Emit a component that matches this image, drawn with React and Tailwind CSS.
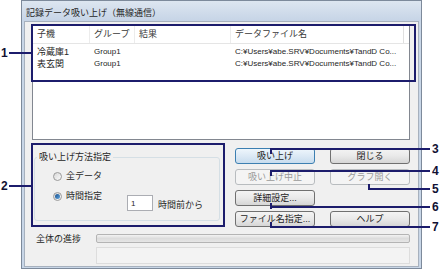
export default function App() {
  return (
    <div className="relative w-[443px] h-[271px] overflow-hidden bg-white text-[#262626] font-['Liberation_Sans','Noto_Sans_CJK_JP',sans-serif] text-[9px]">
      {/* window */}
      <div className="ml-[21px] w-[401px] h-[269px] flex flex-col border border-[#7d8a9b] bg-[#c8d6e7]">
        <div className="h-[20px] shrink-0 flex items-center pl-[4px] pt-[4px] leading-[12px] bg-gradient-to-b from-[#dde6f0] to-[#c6d4e6]">
          記録データ吸い上げ（無線通信）
        </div>

        <div className="flex-1 ml-[2px] mr-[2px] mb-[1px] border border-[#a7b1be] bg-[#f0f0f0] flex flex-col">
          {/* list */}
          <div className="ml-[7px] mt-[3px] w-[378px] h-[115px] border border-[#828790] bg-white flex flex-col">
            <div className="h-[18px] shrink-0 flex border-b border-[#e5e5e5] text-[#3a3a3a] leading-[17px]">
              <div className="w-[57px] pl-[4px] border-r border-[#ececec]">子機</div>
              <div className="w-[45px] pl-[4px] border-r border-[#ececec]">グループ</div>
              <div className="w-[96px] pl-[4px] border-r border-[#ececec]">結果</div>
              <div className="w-[173px] pl-[4px] border-r border-[#e0e0e0]">データファイル名</div>
            </div>
            <div className="pt-[2px]">
              <Row name="冷蔵庫1" />
              <Row name="表玄関" />
            </div>
          </div>

          {/* method + buttons */}
          <div className="flex items-start">
            <fieldset className="ml-[9px] mt-[11px] w-[186px] h-[70px] border border-[#d5dfe5] rounded-[3px] px-0 pb-0">
              <legend className="ml-[2px] px-[2px] leading-[12px]">吸い上げ方法指定</legend>
              <div className="flex items-center mt-[7px] ml-[18px] h-[12px]">
                <Radio />
                <span className="ml-[4px] leading-[12px]">全データ</span>
              </div>
              <div className="flex items-start mt-[8px] ml-[18px]">
                <div className="w-[74px] flex items-center h-[12px]">
                  <Radio checked />
                  <span className="ml-[4px] leading-[12px]">時間指定</span>
                </div>
                <div className="mt-[5px] w-[26px] h-[16px] border border-[#abadb3] bg-white pl-[3px] pt-[3px] text-[8px] leading-[10px]">
                  1
                </div>
                <span className="ml-[5px] mt-[9px] leading-[12px]">時間前から</span>
              </div>
            </fieldset>

            <div className="ml-[15px] mt-[8px] grid grid-cols-[80px_80px] gap-x-[15px] gap-y-[5px]">
              <Btn primary>吸い上げ</Btn>
              <Btn>閉じる</Btn>
              <Btn disabled>吸い上げ中止</Btn>
              <Btn disabled>グラフ開く</Btn>
              <Btn>詳細設定...</Btn>
              <div />
              <Btn>ファイル名指定...</Btn>
              <Btn>ヘルプ</Btn>
            </div>
          </div>

          {/* progress */}
          <div className="flex items-start mt-[7px]">
            <div className="ml-[11px] w-[60px] leading-[10px]">全体の進捗</div>
            <div className="w-[314px] flex flex-col">
              <div className="h-[9px] rounded-[2px] border border-[#b4b4b4] bg-gradient-to-b from-[#f2f2f2] via-[#dcdcdc] to-[#e6e6e6]" />
              <div className="mt-[4px] h-[17px] border border-[#dddddd] bg-[#f3f3f3]" />
            </div>
          </div>
        </div>
      </div>

      {/* callout 1 */}
      <div className="absolute left-[31px] top-[24px] w-[385px] h-[58px] border-2 border-[#1c1c6c]" />
      <div className="absolute left-[9px] top-[52px] w-[22px] h-[2px] bg-[#1c1c6c]" />
      <Num className="left-[1px] top-[47px]">1</Num>

      {/* callout 2 */}
      <div className="absolute left-[31px] top-[143px] w-[194px] h-[84px] border-2 border-[#1c1c6c]" />
      <div className="absolute left-[9px] top-[185px] w-[22px] h-[2px] bg-[#1c1c6c]" />
      <Num className="left-[1px] top-[180px]">2</Num>

      {/* callout 3 */}
      <div className="absolute left-[270px] top-[148px] w-[2px] h-[6px] bg-[#1c1c6c]" />
      <div className="absolute left-[270px] top-[148px] w-[160px] h-[2px] bg-[#1c1c6c]" />
      <Num className="left-[432px] top-[143px]">3</Num>

      {/* callout 4 */}
      <div className="absolute left-[270px] top-[170px] w-[2px] h-[6px] bg-[#1c1c6c]" />
      <div className="absolute left-[270px] top-[170px] w-[160px] h-[2px] bg-[#1c1c6c]" />
      <Num className="left-[432px] top-[165px]">4</Num>

      {/* callout 5 */}
      <div className="absolute left-[368px] top-[184px] w-[2px] h-[6px] bg-[#1c1c6c]" />
      <div className="absolute left-[368px] top-[188px] w-[62px] h-[2px] bg-[#1c1c6c]" />
      <Num className="left-[432px] top-[183px]">5</Num>

      {/* callout 6 */}
      <div className="absolute left-[270px] top-[203px] w-[2px] h-[6px] bg-[#1c1c6c]" />
      <div className="absolute left-[270px] top-[206px] w-[160px] h-[2px] bg-[#1c1c6c]" />
      <Num className="left-[432px] top-[201px]">6</Num>

      {/* callout 7 */}
      <div className="absolute left-[270px] top-[222px] w-[2px] h-[6px] bg-[#1c1c6c]" />
      <div className="absolute left-[270px] top-[226px] w-[160px] h-[2px] bg-[#1c1c6c]" />
      <Num className="left-[432px] top-[221px]">7</Num>
    </div>
  )
}

function Row({ name }) {
  return (
    <div className="flex h-[12px] leading-[12px]">
      <div className="w-[57px] pl-[4px]">{name}</div>
      <div className="w-[45px] pl-[4px] text-[8px]">Group1</div>
      <div className="w-[96px] pl-[4px]" />
      <div className="w-[173px] pl-[4px] text-[8px] whitespace-nowrap">
        C:¥Users¥abe.SRV¥Documents¥TandD Co...
      </div>
    </div>
  )
}

function Radio({ checked }) {
  return (
    <div className="w-[9px] h-[9px] rounded-full border border-[#9a9a9a] bg-gradient-to-br from-[#d8d8d8] to-[#fafafa] flex items-center justify-center">
      {checked && (
        <div className="w-[5px] h-[5px] rounded-full bg-gradient-to-br from-[#174f8c] to-[#5fa6e0]" />
      )}
    </div>
  )
}

function Btn({ children, primary, disabled }) {
  let cls =
    'h-[16px] rounded-[3px] border flex items-center justify-center leading-[12px] '
  if (primary) {
    cls += 'border-[#3c7fb1] bg-gradient-to-b from-[#eef6fc] via-[#dce9f5] to-[#c7dcee] text-[#1e1e1e]'
  } else if (disabled) {
    cls += 'border-[#b8bcbf] bg-[#f4f4f4] text-[#9a9a9a]'
  } else {
    cls += 'border-[#707070] bg-gradient-to-b from-[#f4f4f4] via-[#e9e9e9] to-[#d6d6d6] text-[#1e1e1e]'
  }
  return <div className={cls}>{children}</div>
}

function Num({ children, className }) {
  return (
    <div className={'absolute text-[12px] leading-[12px] font-bold text-[#111133] ' + className}>
      {children}
    </div>
  )
}
